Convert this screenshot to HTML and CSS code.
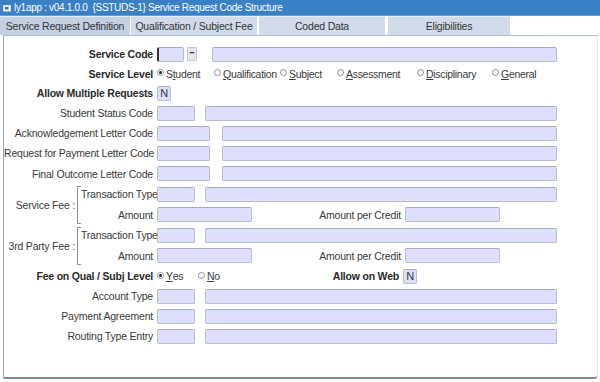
FILE: index.html
```html
<html lang="en">
<head>
    <meta charset="UTF-8">
    <title>Service Request Code Structure</title>
    <link rel="stylesheet" href="styles.css">
</head>
<body>
    <div class="titlebar">
        <svg class="app-icon" width="8" height="8" viewBox="0 0 8 8"><rect x="0.5" y="1.5" width="7" height="5.5" fill="#fff" stroke="#dfe8f4"/><path d="M2 3 L5.5 3 L5.5 5.5 L2 5.5 Z" fill="#3a6fa8"/></svg>
        <span>ly1app : v04.1.0.0 &nbsp;{SSTUDS-1} Service Request Code Structure</span>
    </div>

    <div class="tabs">
        <div class="tab active">Service Request Definition</div>
        <div class="tab t2">Qualification / Subject Fee</div>
        <div class="tab t3">Coded Data</div>
        <div class="tab t4">Eligibilities</div>
    </div>

    <div class="panel">
        <div class="row">
            <label class="lbl bold">Service Code</label>
            <span class="field w26 cursor"></span>
            <span class="lov">&middot;&middot;&middot;</span>
            <span class="field wide sc-desc"></span>
        </div>

        <div class="row short">
            <label class="lbl bold">Service Level</label>
            <div class="radios">
                <span class="opt o1"><i class="radio on"></i>S<u>t</u>udent</span>
                <span class="opt o2"><i class="radio"></i><u>Q</u>ualification</span>
                <span class="opt o3"><i class="radio"></i><u>S</u>ubject</span>
                <span class="opt o4"><i class="radio"></i><u>A</u>ssessment</span>
                <span class="opt o5"><i class="radio"></i><u>D</u>isciplinary</span>
                <span class="opt"><i class="radio"></i><u>G</u>eneral</span>
            </div>
        </div>

        <div class="row">
            <label class="lbl bold">Allow Multiple Requests</label>
            <span class="field flag">N</span>
        </div>

        <div class="row">
            <label class="lbl">Student Status Code</label>
            <span class="field w37"></span>
            <span class="field wide gap10"></span>
        </div>
        <div class="row">
            <label class="lbl">Acknowledgement Letter Code</label>
            <span class="field w52"></span>
            <span class="field wide gap12"></span>
        </div>
        <div class="row">
            <label class="lbl">Request for Payment Letter Code</label>
            <span class="field w52"></span>
            <span class="field wide gap12"></span>
        </div>
        <div class="row tall">
            <label class="lbl">Final Outcome Letter Code</label>
            <span class="field w52"></span>
            <span class="field wide gap12"></span>
        </div>

        <div class="group">
            <div class="group-lbl">Service Fee :</div>
            <div class="bracket"></div>
            <div class="group-rows">
                <div class="row">
                    <label class="lbl sub">Transaction Type</label>
                    <span class="field w37"></span>
                    <span class="field wide gap10"></span>
                </div>
                <div class="row tall">
                    <label class="lbl sub">Amount</label>
                    <span class="field w94"></span>
                    <label class="lbl per">Amount per Credit</label>
                    <span class="field w94"></span>
                </div>
            </div>
        </div>

        <div class="group">
            <div class="group-lbl">3rd Party Fee :</div>
            <div class="bracket"></div>
            <div class="group-rows">
                <div class="row">
                    <label class="lbl sub">Transaction Type</label>
                    <span class="field w37"></span>
                    <span class="field wide gap10"></span>
                </div>
                <div class="row tall">
                    <label class="lbl sub">Amount</label>
                    <span class="field w94"></span>
                    <label class="lbl per">Amount per Credit</label>
                    <span class="field w94"></span>
                </div>
            </div>
        </div>

        <div class="row">
            <label class="lbl bold">Fee on Qual / Subj Level</label>
            <div class="radios">
                <span class="opt yes"><i class="radio on"></i><u>Y</u>es</span>
                <span class="opt no"><i class="radio"></i><u>N</u>o</span>
            </div>
            <label class="lbl bold web">Allow on Web</label>
            <span class="field flag">N</span>
        </div>

        <div class="row">
            <label class="lbl">Account Type</label>
            <span class="field w37"></span>
            <span class="field wide gap10"></span>
        </div>
        <div class="row">
            <label class="lbl">Payment Agreement</label>
            <span class="field w37"></span>
            <span class="field wide gap10"></span>
        </div>
        <div class="row">
            <label class="lbl">Routing Type Entry</label>
            <span class="field w37"></span>
            <span class="field wide gap10"></span>
        </div>
    </div>
</body>
</html>
```

FILE: styles.css
```css
*{
    margin:0;
    padding:0;
    box-sizing:border-box;
}

body{
    font-family:"Liberation Sans", Arial, sans-serif;
    font-size:10.5px;
    letter-spacing:-0.2px;
    color:#3a3a3a;
    background:#fff;
    width:600px;
    height:382px;
    overflow:hidden;
}

.titlebar{
    height:16px;
    background:#3a80c4;
    color:#fff;
    font-size:10px;
    letter-spacing:-0.3px;
    display:flex;
    align-items:center;
    padding-left:3px;
    border-bottom:1px solid #6a9ccf;
}

.app-icon{
    margin-right:3px;
}

.tabs{
    display:flex;
    height:19px;
    align-items:stretch;
}

.tab{
    background:#d1dcea;
    color:#333;
    display:flex;
    align-items:center;
    justify-content:center;
    width:126px;
    margin-right:2px;
    border-top:1px solid #e6edf5;
}

.tab.active{
    background:#c2d1e3;
    width:130px;
    margin-right:1px;
}

.t3{
    margin-right:3px;
}

.t4{
    width:122px;
}

.panel{
    margin-left:3px;
    width:595px;
    height:344px;
    border-left:1px solid #9aa3ad;
    border-right:1px solid #e2e6ea;
    border-bottom:2px solid #7e8a96;
    border-top:1px solid #a9bfd8;
    border-bottom-right-radius:4px;
    padding-top:8px;
}

.row{
    display:flex;
    align-items:center;
    height:20px;
}

.row.short{
    height:19px;
}

.row.tall{
    height:21px;
}

.lbl{
    width:153px;
    text-align:right;
    padding-right:4px;
    white-space:nowrap;
    flex-shrink:0;
}

.bold{
    font-weight:bold;
    color:#2a2a2a;
}

.field{
    display:inline-block;
    height:15px;
    background:#dedffc;
    border:1px solid #b9bccb;
    border-top-color:#a8abbb;
    border-radius:2px;
    flex-shrink:0;
    font-size:11px;
    line-height:13px;
    color:#334;
}

.w26{ width:27px; }
.w37{ width:38px; }
.w52{ width:53px; }
.w94{ width:95px; }

.wide{
    width:auto;
    flex-grow:1;
    flex-shrink:1;
    margin-right:40px;
}

.gap10{ margin-left:10px; }
.gap12{ margin-left:12px; }
.sc-desc{ margin-left:15px; }

.cursor{
    border-left:2px solid #333;
}

.lov{
    width:10px;
    height:14px;
    margin-left:3px;
    background:#e4e6ea;
    border:1px solid #c4c8d0;
    font-size:9px;
    line-height:11px;
    text-align:center;
    letter-spacing:-1.5px;
    text-indent:-1px;
    color:#111;
    font-weight:bold;
    flex-shrink:0;
    overflow:hidden;
}

.flag{
    width:14px;
    text-align:center;
    padding-left:0;
}

.radios{
    display:flex;
    align-items:center;
    flex-shrink:0;
}

.opt{
    display:flex;
    align-items:center;
    white-space:nowrap;
    flex-shrink:0;
    letter-spacing:-0.3px;
}

.o1{ width:57px; }
.o2{ width:66px; }
.o3{ width:57px; }
.o4{ width:80px; }
.o5{ width:75px; }
.yes{ width:41px; }
.no{ width:30px; }

.radio{
    display:inline-block;
    width:7px;
    height:7px;
    border:1px solid #8a8f98;
    border-radius:50%;
    margin-right:2px;
    margin-top:-2px;
    position:relative;
    background:#fff;
    flex-shrink:0;
}

.radio.on::after{
    content:"";
    position:absolute;
    left:1px;
    top:1px;
    width:3px;
    height:3px;
    border-radius:50%;
    background:#222;
}

u{
    text-decoration-thickness:1px;
    text-underline-offset:1px;
}

.web{
    width:175px;
}

.group{
    display:flex;
    align-items:center;
}

.group-lbl{
    width:71px;
    text-align:right;
    white-space:nowrap;
    flex-shrink:0;
}

.bracket{
    width:4px;
    height:38px;
    margin-left:2px;
    border:1px solid #8a8f98;
    border-right:none;
    flex-shrink:0;
}

.group-rows{
    flex-grow:1;
}

.lbl.sub{
    width:76px;
}

.lbl.per{
    width:153px;
}
```
